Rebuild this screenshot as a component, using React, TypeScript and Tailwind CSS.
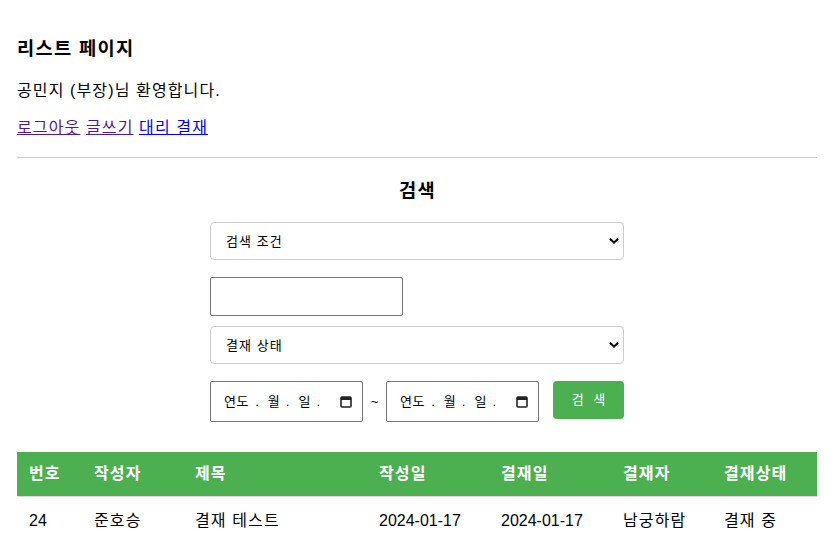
import React from "react";

const font = { fontFamily: '"Liberation Sans", "Noto Sans CJK KR", sans-serif' };

function Chevron() {
  return (
    <svg width="10" height="7" viewBox="0 0 10 7" className="absolute right-[4px] top-1/2 -translate-y-1/2">
      <path d="M1 1.2 L5 5.2 L9 1.2" fill="none" stroke="#000" strokeWidth="2" />
    </svg>
  );
}

function FakeSelect({ label }: { label: string }) {
  return (
    <div className="relative w-[414px] h-[38px] border border-[#cccccc] rounded-[4px] bg-white flex items-center pl-[15px] text-[13px] text-black">
      <span className="leading-none tracking-[0.08em]">{label}</span>
      <Chevron />
    </div>
  );
}

function CalIcon() {
  return (
    <svg width="12" height="13" viewBox="0 0 12 13">
      <rect x="1" y="2" width="10" height="10" rx="1" fill="none" stroke="#222" strokeWidth="1.6" />
      <rect x="1" y="2" width="10" height="3" fill="#222" />
    </svg>
  );
}

function FakeDate() {
  return (
    <div className="w-[153px] h-[41px] border border-[#767676] rounded-[2px] bg-white flex items-center pl-[13px] pr-[10px] text-[13px] text-black">
      <span className="leading-none tracking-[0.05em]">연도</span>
      <span className="leading-none ml-[6px]">.</span>
      <span className="leading-none ml-[9px]">월</span>
      <span className="leading-none ml-[6px]">.</span>
      <span className="leading-none ml-[9px]">일</span>
      <span className="leading-none ml-[6px]">.</span>
      <span className="ml-auto flex items-center"><CalIcon /></span>
    </div>
  );
}

export default function App() {
  const cols = [
    { h: "번호", w: "w-[65px]", v: "24" },
    { h: "작성자", w: "w-[101px]", v: "준호승" },
    { h: "제목", w: "w-[184px]", v: "결재 테스트" },
    { h: "작성일", w: "w-[122px]", v: "2024-01-17" },
    { h: "결재일", w: "w-[122px]", v: "2024-01-17" },
    { h: "결재자", w: "w-[101px]", v: "남궁하람" },
    { h: "결재상태", w: "w-[105px]", v: "결재 중" },
  ];
  return (
    <div style={font} className="w-[835px] h-[543px] overflow-hidden bg-white text-black px-[17px]">
      <h3 className="pt-[38px] text-[18.7px] font-bold leading-[22px] tracking-[0.07em]">리스트 페이지</h3>
      <p className="mt-[22px] text-[16px] leading-[18px] tracking-[0.07em]">공민지 (부장)님 환영합니다.</p>
      <div className="mt-[19px] text-[16px] leading-[18px] tracking-[0.07em]">
        <a className="underline text-[#551a8b]">로그아웃</a>{" "}
        <a className="underline text-[#551a8b]">글쓰기</a>{" "}
        <a className="underline text-[#0000ee]">대리 결재</a>
      </div>
      <div className="mt-[20px] h-px bg-[#cccccc] w-[800px]" />
      <div className="w-[800px] flex flex-col items-center">
        <h3 className="mt-[22px] text-[18.7px] font-bold leading-[22px] tracking-[0.07em] pl-[1px]">검색</h3>
        <div className="mt-[20px] w-[414px] flex flex-col">
          <FakeSelect label="검색 조건" />
          <div className="mt-[17px] w-[193px] h-[39px] border border-[#767676] rounded-[2px] bg-white" />
          <div className="mt-[10px]">
            <FakeSelect label="결재 상태" />
          </div>
          <div className="mt-[17px] flex items-start">
            <FakeDate />
            <span className="w-[23px] text-center text-[13px] leading-none mt-[14px]">~</span>
            <FakeDate />
            <button className="ml-[14px] w-[71px] h-[38px] rounded-[4px] bg-[#4caf50] text-white text-[13px] tracking-[3px] pl-[3px]">
              검 색
            </button>
          </div>
        </div>
      </div>
      <div className="mt-[30px] w-[800px]">
        <div className="flex h-[45px] bg-[#4caf50] text-white font-bold text-[16px] items-center border-b border-[#dddddd]">
          {cols.map((c) => (
            <div key={c.h} className={`${c.w} pl-[12px] leading-[18px] tracking-[0.07em]`}>{c.h}</div>
          ))}
        </div>
        <div className="flex h-[48px] items-center text-[16px]">
          {cols.map((c, i) => (
            <div
              key={c.h}
              className={`${c.w} pl-[12px] leading-[18px] ${i === 0 || i === 3 || i === 4 ? "" : "tracking-[0.07em]"}`}
            >
              {c.v}
            </div>
          ))}
        </div>
      </div>
    </div>
  );
}
